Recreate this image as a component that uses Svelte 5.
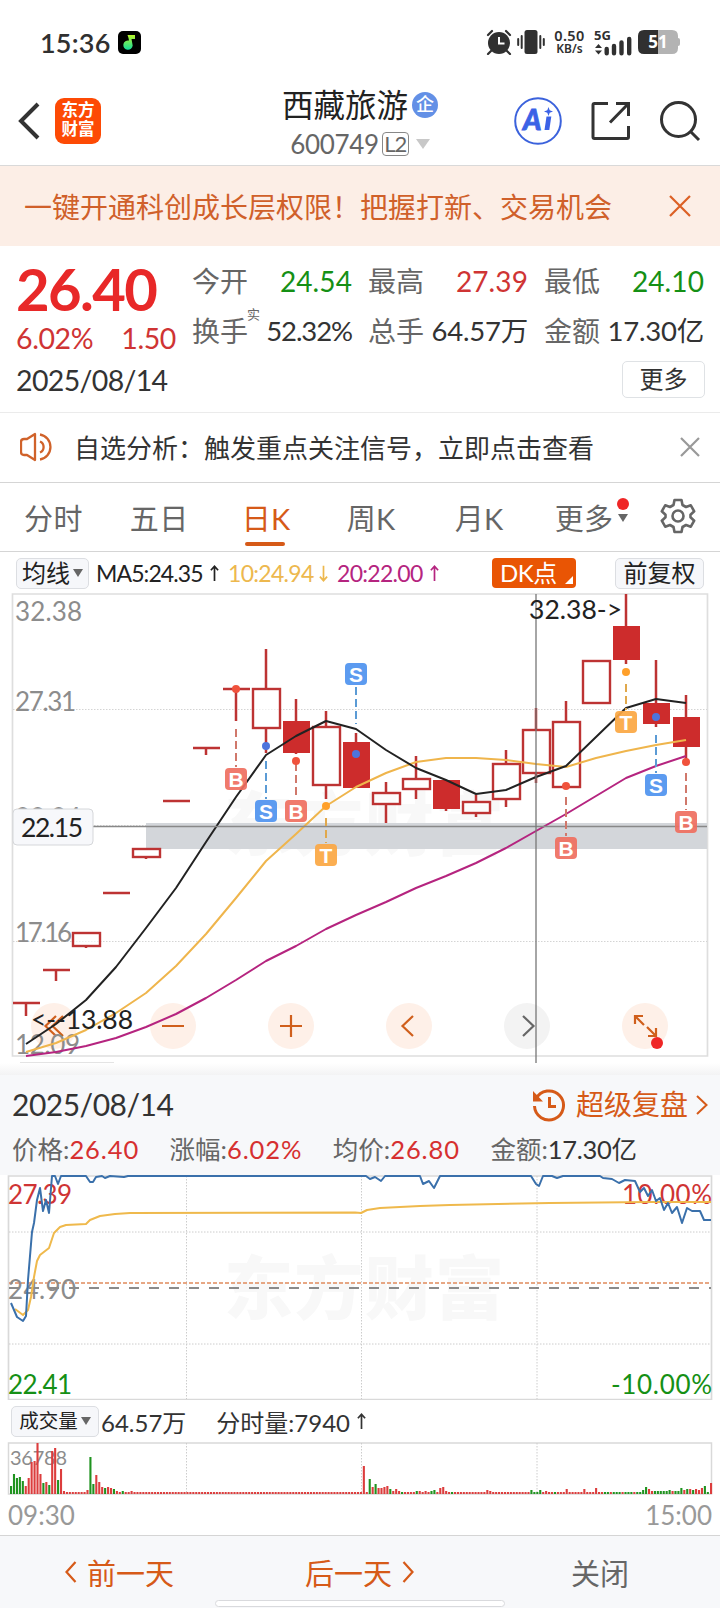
<script lang="ts">
  type Candle = { o: number; c: number; hi: number; lo: number; kind: "up" | "down" | "flat" };
  type Mark = { i: number; t: "B" | "S" | "T"; dot: number; y: number };

  const STEP = 30;
  const cx = (i: number) => 26 + i * STEP;

  // [top, bottom, high, low, kind] in chart pixels
  const raw: [number, number, number, number, Candle["kind"]][] = [
    [1003, 1003, 1003, 1016, "flat"],
    [970, 970, 970, 981, "flat"],
    [933, 946, 933, 948, "up"],
    [893, 893, 893, 893, "flat"],
    [849, 857, 849, 859, "up"],
    [801, 801, 801, 801, "flat"],
    [748, 748, 748, 755, "flat"],
    [689, 689, 689, 721, "flat"],
    [689, 728, 649, 753, "up"],
    [722, 753, 699, 754, "down"],
    [727, 785, 711, 799, "up"],
    [743, 788, 733, 788, "down"],
    [793, 804, 782, 823, "up"],
    [779, 789, 756, 799, "up"],
    [781, 809, 781, 811, "down"],
    [802, 813, 795, 817, "up"],
    [764, 799, 750, 807, "up"],
    [730, 773, 708, 783, "up"],
    [722, 787, 701, 787, "up"],
    [661, 703, 661, 703, "up"],
    [627, 660, 594, 664, "down"],
    [704, 724, 660, 727, "down"],
    [718, 747, 695, 762, "down"],
  ];
  const candles: Candle[] = raw.map(([o, c, hi, lo, kind]) => ({ o, c, hi, lo, kind }));

  const ma5 = [1044, 1024, 1000, 967, 928, 888, 842, 797, 755, 736, 721, 729, 750, 768, 780, 794, 790, 777, 766, 737, 708, 699, 703];
  const ma10 = [1052, 1043, 1030, 1013, 993, 966, 934, 898, 861, 834, 806, 787, 773, 762, 758, 758, 760, 764, 767, 758, 751, 745, 740];
  const ma20 = [1056, 1052, 1046, 1038, 1027, 1014, 998, 980, 961, 946, 929, 915, 902, 888, 876, 863, 848, 831, 814, 796, 778, 766, 756];
  const pts = (a: number[]) => a.map((y, i) => `${cx(i)},${y}`).join(" ");

  const marks: Mark[] = [
    { i: 7, t: "B", dot: 689, y: 779 },
    { i: 8, t: "S", dot: 746, y: 811 },
    { i: 9, t: "B", dot: 761, y: 811 },
    { i: 10, t: "T", dot: 806, y: 855 },
    { i: 11, t: "S", dot: 754, y: 674 },
    { i: 18, t: "B", dot: 786, y: 848 },
    { i: 20, t: "T", dot: 672, y: 722 },
    { i: 21, t: "S", dot: 717, y: 785 },
    { i: 22, t: "B", dot: 762, y: 822 },
  ];
  const markLine = (m: Mark) =>
    m.y < m.dot
      ? { a: m.y + 13, b: 724 }
      : { a: m.dot + (m.i === 7 ? 40 : m.i === 8 ? 15 : m.t === "T" ? 12 : m.i === 9 ? 2 : m.i === 21 ? 18 : 11), b: m.y - 12 };

  const priceLine =
    "11,1303 17,1317 23,1321 26,1316 28,1280 32,1232 34,1223 37,1200 40,1188 43,1211 46,1200 49,1213 52,1176 55,1176 58,1184 61,1176 86,1176 90,1182 93,1182 96,1177 102,1176 105,1178 110,1176 124,1177 128,1176 361,1176 366,1176 370,1179 375,1177 381,1181 385,1176 420,1176 423,1184 429,1181 434,1188 440,1176 531,1176 536,1184 539,1186 543,1176 552,1176 557,1178 563,1176 600,1176 603,1178 612,1179 619,1183 625,1180 635,1181 640,1192 644,1188 648,1196 652,1190 656,1201 660,1198 664,1210 668,1203 672,1213 677,1207 682,1223 687,1208 692,1211 700,1211 704,1220 711,1220";
  const avgLine =
    "15,1309 23,1315 28,1310 31,1297 34,1277 37,1261 40,1255 49,1248 54,1233 60,1227 66,1225 86,1224 90,1220 100,1216 115,1214 130,1213 355,1212.5 361,1213 367,1210 380,1208 400,1207 420,1206 450,1205 550,1203 650,1202 711,1202";

  // minute volume; negative = falling minute
  const spikes: Record<number, number> = {
    0: -8, 1: -20, 2: -16, 3: -17, 4: -13, 5: 8, 6: 16, 7: 32, 8: 33, 9: 51, 10: 20, 11: -11,
    12: 12, 13: -9, 14: 43, 15: 46, 16: -14, 17: 25, 18: 3, 26: 4, 27: -37, 28: -10, 29: 19,
    30: 12, 31: 7, 32: -6, 33: 7, 34: 6, 35: -5, 36: 3, 38: -3, 41: 3, 120: 28, 122: -15,
    123: 7, 124: -10, 125: 6, 126: 6, 127: 7, 128: 8, 129: -5, 130: 3, 131: 5, 132: 3, 133: -2,
    138: -3, 139: 3, 141: 3, 143: -3, 144: -4, 146: 6, 147: 7, 148: 3, 149: 2, 150: -2, 162: 4,
    163: 3, 177: -4, 178: -2, 179: -2, 180: -4, 182: 3, 185: -2, 189: 5, 195: 5, 199: 6, 215: -4,
    216: -7, 217: 5, 218: 3, 219: -3, 220: -3, 221: -3, 222: -3, 223: -3, 224: -4, 225: 3,
    226: -3, 227: -3, 228: -6, 229: 4, 230: -5, 231: 5, 232: -4, 233: 5, 234: 4, 235: 6, 236: -8,
    237: -2, 238: 11,
  };
  const volume = Array.from({ length: 239 }, (_, i) => {
    const v = spikes[i] ?? (i > 201 && i < 215 && i % 4 ? -2 : 2);
    return { x: i === 238 ? 711 : 11 + i * 2.94, h: Math.abs(v), up: v > 0 };
  });

  const quotes = [
    { k: "今开", v: "24.54", cls: "green" },
    { k: "最高", v: "27.39", cls: "red" },
    { k: "最低", v: "24.10", cls: "green" },
    { k: "换手", v: "52.32%", cls: "pct", sup: "实" },
    { k: "总手", v: "64.57万", cls: "" },
    { k: "金额", v: "17.30亿", cls: "" },
  ];
  const tabs = ["分时", "五日", "日K", "周K", "月K"];
  let active = $state("日K");

  const stats = [
    { k: "价格", v: "26.40", red: true },
    { k: "涨幅", v: "6.02%", red: true },
    { k: "均价", v: "26.80", red: true },
    { k: "金额", v: "17.30亿", red: false },
  ];
</script>

<div class="screen">
  <div class="status">
    <span class="clock">15:36</span>
    <svg class="app-dot" width="23" height="23" viewBox="0 0 23 23">
      <defs>
        <linearGradient id="note" x1="0" y1="0" x2="0" y2="1">
          <stop offset="0" stop-color="#b8f52a" />
          <stop offset="1" stop-color="#12dc9c" />
        </linearGradient>
      </defs>
      <rect width="23" height="23" rx="5" fill="#000" />
      <path d="M9.500 4H17v4h-3.500l1.200 6.500a4.700 4.700 0 1 1-3.700-5L10.500 7z" fill="url(#note)" />
    </svg>
    <span class="grow"></span>
    <svg class="alarm" width="26" height="26" viewBox="0 0 26 26">
      <circle cx="13" cy="14" r="11" fill="#303030" />
      <path d="M2 6l4-4M24 6l-4-4M5 22l-3 3M21 22l3 3" stroke="#303030" stroke-width="2.200" stroke-linecap="round" />
      <path d="M13 8v6.500h5.500" fill="none" stroke="#fff" stroke-width="2" />
    </svg>
    <svg class="vibrate" width="28" height="26" viewBox="0 0 28 26">
      <rect x="7.500" y="1" width="13" height="24" rx="2.500" fill="#303030" />
      <path d="M4.700 7v12M23.300 7v12M1.200 10v6M26.800 10v6" stroke="#303030" stroke-width="2" stroke-linecap="round" />
    </svg>
    <div class="speed"><b>0.50</b><span>KB/s</span></div>
    <svg class="signal" width="40" height="36" viewBox="0 -5 40 36">
      <text x="0" y="10.500" class="g5">5G</text>
      <path d="M1 19l3.500-4 3.500 4zM1 21.500l3.500 4 3.500-4z" fill="#303030" />
      <path d="M12.700 20v4.200M20 17v7.200M27.500 13.500v10.700M35.200 10v14.200" stroke="#303030" stroke-width="4.400" stroke-linecap="round" />
    </svg>
    <svg width="42" height="24" viewBox="0 0 42 24">
      <path d="M6 0H34Q40 0 40 6V18Q40 24 34 24H6z" fill="#b3b3b3" />
      <path d="M40 8q2 0 2 2v4q0 2-2 2z" fill="#b3b3b3" />
      <path d="M6 0H20V24H6Q0 24 0 18V6Q0 0 6 0z" fill="#303030" />
      <text x="20" y="18.200" text-anchor="middle" class="batt">51</text>
    </svg>
  </div>

  <header>
    <div class="left">
      <svg width="22" height="38" viewBox="0 0 22 38"><path d="M20 2L3 19l17 17" fill="none" stroke="#333" stroke-width="4" /></svg>
      <div class="logo"><span>东方</span><span>财富</span></div>
    </div>
    <div class="title">
      <div class="name">西藏旅游<i class="corp">企</i></div>
      <div class="code">600749<i class="l2">L2</i><i class="caret"></i></div>
    </div>
    <div class="tools">
      <svg width="48" height="48" viewBox="0 0 48 48">
        <circle cx="24" cy="24" r="22.800" fill="none" stroke="#3b62dc" stroke-width="2" />
        <text x="9" y="33" class="ai">A</text>
        <path d="M32.500 19.500h4.800l-2 13.500h-4.800z" fill="#3b62e6" />
        <path d="M34.500 10l1.200 3.300 3.300 1.200-3.300 1.200-1.200 3.300-1.200-3.300-3.300-1.200 3.300-1.200z" fill="#3b62e6" />
      </svg>
      <svg width="40" height="40" viewBox="0 0 40 40" fill="none" stroke="#333" stroke-width="3">
        <path d="M17 2.500H3.500Q2 2.500 2 4V36q0 1.500 1.500 1.500H36q1.500 0 1.500-1.500V25M25 2.500H37.500V15M37 3L19 21.500" />
      </svg>
      <svg width="42" height="42" viewBox="0 0 42 42" fill="none" stroke="#333" stroke-width="3">
        <circle cx="19.500" cy="19.500" r="17" /><path d="M31.500 31.500L40 40" />
      </svg>
    </div>
  </header>

  <div class="banner">
    <span>一键开通科创成长层权限！把握打新、交易机会</span>
    <svg width="22" height="22" viewBox="0 0 22 22"><path d="M1 1l20 20M21 1L1 21" stroke="#dc6024" stroke-width="2.200" /></svg>
  </div>

  <section class="quote">
    <div class="price">
      <strong>26.40</strong>
      <div class="chg"><span>6.02%</span><span>1.50</span></div>
      <div class="date">2025/08/14</div>
    </div>
    <div class="right">
      <div class="cells">
        {#each quotes as q}
          <div class="cell">
            <span class="k">{q.k}{#if q.sup}<sup>{q.sup}</sup>{/if}</span>
            <span class="v {q.cls}">{q.v}</span>
          </div>
        {/each}
      </div>
      <button class="more">更多</button>
    </div>
  </section>

  <div class="news">
    <svg width="34" height="30" viewBox="0 0 34 30" fill="none" stroke="#d0622a" stroke-width="2.300">
      <path d="M15 2v26l-8-5H4q-3 0-3-3v-10q0-3 3-3h3z" stroke-linejoin="round" />
      <path d="M20 9.500a6 6 0 0 1 0 11M20 2.500a12.700 12.700 0 0 1 0 25" />
    </svg>
    <span>自选分析：触发重点关注信号，立即点击查看</span>
    <svg width="20" height="20" viewBox="0 0 20 20"><path d="M1 1l18 18M19 1L1 19" stroke="#999" stroke-width="2.200" /></svg>
  </div>

  <nav class="tabs">
    {#each tabs as t}
      <button class:active={active === t} onclick={() => (active = t)}>{t}</button>
    {/each}
    <button class="tab-more">更多<svg width="12" height="32" viewBox="0 0 12 32"><circle cx="6" cy="7" r="6" fill="#ef2626" /><path d="M1 17h10l-5 8z" fill="#666" /></svg></button>
    <svg class="gear" width="36" height="36" viewBox="0 0 36 36" fill="none" stroke="#666" stroke-width="2.600" stroke-linejoin="round">
      <path d="M14.500 2h7l1 5 3.500 2 4.800-1.700 3.400 6-3.700 3.400v2.600l3.700 3.400-3.400 6L26 27l-3.500 2-1 5h-7l-1-5-3.500-2-4.800 1.700-3.400-6 3.700-3.400v-2.600l-3.700-3.400 3.400-6L10 9l3.500-2z" />
      <circle cx="18" cy="18" r="5.500" />
    </svg>
  </nav>

  <div class="indicators">
    <button class="chip">均线<i class="tri"></i></button>
    <span class="ma m5">MA5:24.35</span><svg class="arrow" viewBox="0 0 12 20"><path d="M6 19V3M2 7l4-4.500L10 7" stroke="#222" /></svg>
    <span class="ma m10">10:24.94</span><svg class="arrow" viewBox="0 0 12 20"><path d="M6 2v16M2 14l4 4.500L10 14" stroke="#edb84e" /></svg>
    <span class="ma m20">20:22.00</span><svg class="arrow" viewBox="0 0 12 20"><path d="M6 19V3M2 7l4-4.500L10 7" stroke="#b5247f" /></svg>
    <span class="grow"></span>
    <button class="dk">DK点<svg width="8" height="8" viewBox="0 0 8 8"><path d="M8 0v8H0z" fill="#fff" /></svg></button>
    <button class="chip fq">前复权</button>
  </div>

  <svg class="kline" width="720" height="483" viewBox="0 592 720 483">
    <defs>
      <linearGradient id="shade" x1="0" y1="0" x2="0" y2="1">
        <stop offset="0" stop-color="#fff" /><stop offset="1" stop-color="#f3f3f4" />
      </linearGradient>
    </defs>
    <rect x="0" y="1063" width="720" height="12" fill="url(#shade)" />
    <text x="224" y="850" class="water" textLength="280">东方财富</text>
    <path d="M12.500 594H707.500V1056H12.500z" fill="none" stroke="#dedede" stroke-width="1.700" />
    <path d="M13 709.500H707M13 825.500H707M13 941.500H707" stroke="#d4d4d4" stroke-dasharray="1.500 1.500" />
    <rect x="146" y="823" width="561" height="26" fill="#d3d6da" />

    <g class="pads">
      {#each [54, 173, 291, 409, 527, 645] as x, i}
        <circle cx={x} cy="1026" r="23" fill={i === 4 ? "#f3f3f3" : "#fef0e8"} />
      {/each}
      <path d="M56 1016l-10.500 10L56 1036M63 1016l-10.500 10L63 1036M162 1026h22M280 1026h22M291 1015v22M413 1016l-10.500 10L413 1036" />
      <path d="M523 1016l10.500 10L523 1036" class="gray" />
      <path d="M643 1016h-8v8M635 1016l9 9M648 1036h8v-8M656 1036l-9-9" />
    </g>
    <g class="axis">
      <text x="15" y="621" textLength="67">32.38</text>
      <text x="15" y="711" textLength="61">27.31</text>
      <text x="15" y="827" textLength="66">22.24</text>
      <text x="15" y="942" textLength="57">17.16</text>
      <text x="15" y="1054" textLength="65">12.09</text>
    </g>

    {#each candles as k, i}
      {#if k.lo > k.hi}
        {#if k.kind === "up"}
          <path d="M{cx(i)} {k.hi}V{k.o}M{cx(i)} {k.c}V{k.lo}" class="wick" />
        {:else}
          <path d="M{cx(i)} {k.hi}V{k.lo}" class="wick" />
        {/if}
      {/if}
      {#if k.kind === "up"}
        <rect x={cx(i) - 13} y={k.o} width="27" height={k.c - k.o} class="up" />
      {:else if k.kind === "down"}
        <rect x={cx(i) - 13} y={k.o - 1} width="27" height={k.c - k.o + 1} class="down" />
      {:else}
        <path d="M{cx(i) - 13} {k.o}h27" class="wick" />
      {/if}
    {/each}

    <polyline points={pts(ma20)} stroke="#b5247f" class="ma-line" />
    <polyline points={pts(ma10)} stroke="#efb54c" class="ma-line" />
    <polyline points={pts(ma5)} stroke="#222" class="ma-line" />

    <path d="M93 826.500H707" stroke="#888" stroke-width="1.300" />
    <path d="M536 594V1063" stroke="#777" stroke-opacity="0.650" stroke-width="2" />

    {#each marks as m}
      <g class="mark {m.t}">
        <path d="M{cx(m.i)} {markLine(m).a}V{markLine(m).b}" />
        <circle cx={cx(m.i)} cy={m.dot} r="4" />
        <rect x={cx(m.i) - 11} y={m.y - 11} width="22" height="22" rx="4" />
        <text x={cx(m.i)} y={m.y + 7.500}>{m.t}</text>
      </g>
    {/each}

    <rect x="13" y="809" width="80" height="36" rx="4" fill="#f7f8fb" stroke="#d5d7da" />
    <g class="dark">
      <text x="21" y="837" textLength="62">22.15</text>
      <text x="529" y="619" textLength="93">32.38-&gt;</text>
      <text x="31" y="1029" textLength="102">&lt;--13.88</text>
    </g>
    <circle cx="657" cy="1043" r="6" fill="#ef2626" />
    <path d="M20 1062.500H114" stroke="#e4e4e4" />
  </svg>

  <section class="replay">
    <div class="head">
      <span>2025/08/14</span>
      <div class="super">
        <svg width="34" height="34" viewBox="0 0 34 34" fill="none" stroke="#d65a18" stroke-width="3">
          <path d="M4 11A14.500 14.500 0 1 1 2.500 18" /><path d="M1 3v10.500h10z" fill="#d65a18" stroke="none" />
          <path d="M17.500 9v9.500H24" />
        </svg>
        超级复盘
        <svg width="12" height="20" viewBox="0 0 12 20" fill="none" stroke="#d65a18" stroke-width="2"><path d="M1 1l9.500 9L1 19" /></svg>
      </div>
    </div>
    <div class="stats">
      {#each stats as s}
        <span>{s.k}:<b class:red={s.red}>{s.v}</b></span>
      {/each}
    </div>
  </section>

  <svg class="minute" width="720" height="225" viewBox="0 1175 720 225">
    <text x="224" y="1314" class="water" textLength="280">东方财富</text>
    <path d="M8.500 1176H711.500V1399.500H8.500z" fill="none" stroke="#d9d9d9" stroke-width="1.700" />
    <path d="M9 1232H711M9 1344H711M186.500 1176V1399M361.500 1176V1399M537 1176V1399" stroke="#ccc" stroke-dasharray="1.500 1.500" />
    <path d="M9 1283H711" stroke="#e08a5c" stroke-width="1.300" stroke-dasharray="4 2" />
    <path d="M9 1288H711" stroke="#666" stroke-width="1.500" stroke-dasharray="10 10" />
    <g class="axis">
      <text x="8" y="1299" textLength="68">24.90</text>
      <text x="8" y="1204" textLength="64" class="r">27.39</text>
      <text x="8" y="1394" textLength="64" class="g">22.41</text>
      <text x="622" y="1204" textLength="90" class="r">10.00%</text>
      <text x="611" y="1394" textLength="101" class="g">-10.00%</text>
    </g>
    <polyline points={avgLine} stroke="#efb94c" class="ma-line" />
    <polyline points={priceLine} stroke="#3a70ab" class="ma-line" />
  </svg>

  <div class="vol-head">
    <button class="chip">成交量<i class="tri"></i></button>
    <span>64.57万</span>
    <span class="tick">分时量:7940</span>
    <svg class="arrow" viewBox="0 0 12 20"><path d="M6 19V3M2 7l4-4.500L10 7" stroke="#333" /></svg>
  </div>

  <svg class="vol" width="720" height="54" viewBox="0 1442 720 54">
    <path d="M8.500 1443H711.500V1494H8.500z" fill="none" stroke="#d9d9d9" stroke-width="1.500" />
    <path d="M186.500 1443V1494M361.500 1443V1494M537 1443V1494" stroke="#ccc" stroke-dasharray="1.500 1.500" />
    <text x="10" y="1465" class="peak" textLength="57">36788</text>
    {#each volume as b}
      <rect x={b.x - 1} y={1494 - b.h} width="2.100" height={b.h} fill={b.up ? "#dc3d3d" : "#1f931f"} />
    {/each}
  </svg>
  <div class="times"><span>09:30</span><span>15:00</span></div>

  <footer>
    <div class="prev"><svg width="12" height="22" viewBox="0 0 12 22"><path d="M10.500 1L1.500 11l9 10" /></svg>前一天</div>
    <div class="next">后一天<svg width="12" height="22" viewBox="0 0 12 22"><path d="M1.500 1l9 10-9 10" /></svg></div>
    <div class="close">关闭</div>
    <div class="home"></div>
  </footer>
</div>

<style>
  :global(body) {
    background: #fff;
  }
  .screen {
    width: 720px;
    height: 1608px;
    overflow: hidden;
    display: flex;
    flex-direction: column;
    font-family: Lato, "Noto Sans CJK SC", sans-serif;
    color: #333;
    white-space: nowrap;
  }
  .screen > * {
    flex-shrink: 0;
    box-sizing: border-box;
  }
  svg {
    display: block;
    flex-shrink: 0;
  }
  i {
    font-style: normal;
  }
  button {
    font: inherit;
    color: inherit;
    background: none;
    border: 0;
    padding: 0;
    box-sizing: border-box;
    white-space: nowrap;
  }
  .grow {
    flex: 1;
  }
  .red {
    color: #cf3434;
  }
  .green {
    color: #159015;
  }

  .status {
    height: 84px;
    display: flex;
    align-items: center;
    padding: 0 40px 0 40px;
  }
  .clock {
    width: 78px;
    font-size: 27px;
    font-weight: 600;
    letter-spacing: 0.2px;
    color: #303030;
  }
  .vibrate {
    margin: 0 8px 0 5px;
  }
  .speed {
    width: 33px;
    display: flex;
    flex-direction: column;
    align-items: center;
    font: 600 12px/14px "Noto Sans", sans-serif;
    color: #303030;
    margin-right: 8px;
  }
  .speed b {
    font-size: 14.5px;
    font-weight: 600;
    letter-spacing: 0.4px;
  }
  .signal {
    margin-right: 4px;
  }
  .g5 {
    font: 700 13px "Noto Sans", sans-serif;
    fill: #303030;
  }
  .batt {
    font: 700 17px "Noto Sans", sans-serif;
    fill: #fff;
  }

  header {
    height: 82px;
    display: grid;
    grid-template-columns: 1fr auto 1fr;
    border-bottom: 1px solid #d9d9d9;
  }
  .left {
    display: flex;
    align-items: flex-start;
    gap: 15px;
    padding: 14px 0 0 18px;
  }
  .left svg {
    margin-top: 4px;
  }
  .logo {
    width: 46px;
    height: 46px;
    box-sizing: border-box;
    border-radius: 9px;
    background: #fd4a05;
    color: #fff;
    font-size: 16.5px;
    font-weight: 700;
    line-height: 19px;
    padding-top: 3px;
    display: flex;
    flex-direction: column;
    align-items: center;
  }
  .title {
    display: flex;
    flex-direction: column;
    align-items: center;
    color: #222;
  }
  .name {
    height: 42px;
    display: flex;
    align-items: center;
    font-size: 31.5px;
    line-height: 42px;
  }
  .corp {
    width: 26px;
    height: 26px;
    margin-left: 4px;
    border-radius: 50%;
    background: #6390e6;
    color: #fff;
    font-size: 18px;
    font-weight: 500;
    line-height: 25px;
    text-align: center;
  }
  .code {
    display: flex;
    align-items: center;
    height: 36px;
    font-size: 26px;
    letter-spacing: -0.3px;
    color: #666;
  }
  .l2 {
    width: 25px;
    height: 22px;
    margin-left: 3px;
    border: 1.5px solid #888;
    border-radius: 4px;
    font-size: 22px;
    line-height: 22px;
    text-align: center;
    letter-spacing: -1px;
  }
  .caret {
    margin-left: 7px;
    border: 7px solid transparent;
    border-top: 10px solid #c8c8c8;
    border-bottom: 0;
  }
  .tools {
    display: flex;
    justify-content: flex-end;
    align-items: flex-start;
    padding: 13px 19px 0 0;
  }
  .tools svg:nth-child(2) {
    margin: 4px 28px 0 29px;
  }
  .tools svg:nth-child(3) {
    margin-top: 3px;
  }
  .ai {
    font: italic 900 28px Lato, sans-serif;
    fill: #3b62e6;
    stroke: #3b62e6;
    stroke-width: 0.8px;
  }

  .banner {
    height: 80px;
    display: flex;
    align-items: center;
    justify-content: space-between;
    padding: 0 29px 0 24px;
    background: #fceee6;
    color: #d0602a;
    font-size: 28px;
    padding-bottom: 1px;
  }

  .quote {
    height: 167px;
    display: flex;
    padding: 0 16px;
    border-bottom: 1px solid #ebebeb;
  }
  .price {
    width: 177px;
    padding-top: 11px;
  }
  .price strong {
    display: block;
    font-size: 58px;
    line-height: 64px;
    letter-spacing: -1.6px;
    color: #e82828;
  }
  .chg {
    width: 160px;
    display: flex;
    justify-content: space-between;
    font-size: 28.5px;
    line-height: 34px;
    letter-spacing: -0.4px;
    color: #cf3434;
  }
  .date {
    font-size: 28.5px;
    line-height: 34px;
    margin-top: 8px;
    letter-spacing: -0.65px;
  }
  .right {
    flex: 1;
    display: flex;
    flex-direction: column;
    align-items: flex-end;
  }
  .cells {
    width: 512px;
    display: grid;
    grid-template-columns: 160px 160px 160px;
    column-gap: 16px;
    grid-auto-rows: 50px;
    padding-top: 10px;
  }
  .cell {
    display: flex;
    justify-content: space-between;
    align-items: center;
    font-size: 28px;
    line-height: 40px;
  }
  .cell .k {
    color: #666;
    position: relative;
  }
  .cell .v {
    letter-spacing: 0.1px;
  }
  .cell:nth-child(n + 4) .v {
    font-size: 27.5px;
    letter-spacing: -0.2px;
  }
  .cell:nth-child(n + 4) .pct {
    letter-spacing: -1.1px;
  }
  sup {
    position: absolute;
    left: 55px;
    top: -8px;
    font-size: 13px;
    line-height: 22px;
  }
  .more {
    width: 83px;
    height: 37px;
    margin: 5px -1px 0 0;
    border: 1.5px solid #dfe2e5;
    border-radius: 5px;
    font-size: 24px;
    line-height: 32px;
    padding-bottom: 2px;
  }

  .news {
    height: 70px;
    display: flex;
    align-items: center;
    padding: 0 20px 2px 20px;
    border-bottom: 1px solid #d5d5d5;
    font-size: 26px;
  }
  .news span {
    flex: 1;
    margin-left: 20px;
  }

  .tabs {
    height: 69px;
    display: flex;
    align-items: center;
    border-bottom: 1px solid #d5d5d5;
    font-size: 29px;
    color: #666;
    padding-left: 24px;
  }
  .tabs button {
    height: 68px;
    padding-bottom: 0;
    margin-right: 47px;
    border-bottom: 0;
    letter-spacing: 0.4px;
  }
  .tabs button:nth-child(2) {
    margin-right: 53px;
  }
  .tabs button:nth-child(3) {
    margin-right: 56px;
  }
  .tabs button:nth-child(4) {
    margin-right: 59px;
  }
  .tabs button:nth-child(5) {
    margin-right: 51px;
  }
  .tabs .active {
    position: relative;
    color: #d65a18;
  }
  .tabs .active::after {
    content: "";
    position: absolute;
    left: 3px;
    bottom: 5px;
    width: 40px;
    height: 4px;
    border-radius: 2px;
    background: #d65a18;
  }
  .tabs .tab-more {
    display: flex;
    align-items: center;
    margin-right: 31px;
  }
  .tab-more svg {
    margin: -8px 0 0 4px;
  }
  .gear {
    margin-top: -2px;
  }

  .indicators {
    height: 40px;
    display: flex;
    align-items: center;
    padding: 2px 16px 0;
  }
  .chip {
    height: 31px;
    display: flex;
    align-items: center;
    justify-content: center;
    gap: 3px;
    padding: 0 5px;
    border: 1px solid #dcdee2;
    border-radius: 5px;
    background: #f6f7fa;
    font-size: 24px;
    line-height: 28px;
    color: #222;
  }
  .indicators .chip:first-child {
    width: 73px;
  }
  .tri {
    border: 5px solid transparent;
    border-top: 8px solid #666;
    border-bottom: 0;
  }
  .ma {
    font-size: 23px;
    letter-spacing: -0.7px;
    line-height: 28px;
  }
  .m5 {
    width: 107px;
    margin-left: 7px;
    color: #222;
    letter-spacing: -0.9px;
  }
  .m10 {
    width: 84px;
    margin-left: 8px;
    color: #edb84e;
  }
  .m20 {
    width: 86px;
    margin-left: 8px;
    color: #b5247f;
  }
  .arrow {
    width: 11px;
    height: 18px;
    margin-left: 6px;
    fill: none;
    stroke-width: 1.9;
  }
  .dk {
    width: 84px;
    height: 30px;
    margin-right: 39px;
    display: flex;
    align-items: center;
    padding-left: 8px;
    border-radius: 4px;
    background: #e95504;
    color: #fff;
    font-size: 24px;
    line-height: 28px;
    letter-spacing: -0.5px;
  }
  .dk svg {
    margin: 14px 0 0 8px;
  }
  .fq {
    width: 89px;
  }

  .axis text {
    font-size: 26px;
    fill: #8c8c8c;
  }
  .axis .r {
    fill: #cf3434;
  }
  .axis .g {
    fill: #159015;
  }
  .dark text {
    font-size: 26.5px;
    fill: #222;
  }
  .water {
    font-size: 69px;
    font-weight: 900;
    fill: #f8f8f8;
  }
  .wick {
    stroke: #bd3333;
    stroke-width: 2.5;
  }
  .up {
    fill: #fff;
    fill-opacity: 0.6;
    stroke: #bd3333;
    stroke-width: 2.4;
  }
  .down {
    fill: #cd2c2c;
  }
  .ma-line {
    fill: none;
    stroke-width: 2;
    stroke-linejoin: round;
  }
  .pads path {
    fill: none;
    stroke: #d05f1c;
    stroke-width: 2.2;
  }
  .pads .gray {
    stroke: #666;
  }
  .mark path {
    fill: none;
    stroke-width: 2;
    stroke-dasharray: 8 4;
  }
  .mark text {
    font: 700 21px "Liberation Sans", sans-serif;
    fill: #fff;
    text-anchor: middle;
  }
  .B path {
    stroke: #d0786b;
  }
  .B circle {
    fill: #f0523c;
  }
  .B rect {
    fill: #ef6f60;
    fill-opacity: 0.92;
  }
  .S path {
    stroke: #5b9bd5;
  }
  .S circle {
    fill: #4d74dc;
  }
  .S rect {
    fill: #5c9bf0;
  }
  .T path {
    stroke: #e0a84c;
  }
  .T circle {
    fill: #ffa02a;
  }
  .T rect {
    fill: #fba844;
    fill-opacity: 0.93;
  }

  .replay {
    height: 100px;
    padding: 8px 12px 0;
    background: #f7f8fa;
  }
  .head {
    display: flex;
    justify-content: space-between;
    font-size: 30px;
    line-height: 43px;
    letter-spacing: -0.5px;
  }
  .super {
    display: flex;
    align-items: center;
    font-size: 28px;
    letter-spacing: 0;
    color: #d65a18;
  }
  .super svg:first-child {
    margin-right: 10px;
  }
  .super svg:last-child {
    margin-left: 8px;
  }
  .stats {
    display: flex;
    gap: 30.5px;
    font-size: 25.5px;
    line-height: 47px;
    color: #666;
  }
  .stats b {
    font-weight: 400;
    letter-spacing: -0.3px;
    color: #333;
  }
  .stats b.red {
    letter-spacing: 0.9px;
    color: #d63030;
  }

  .vol-head {
    height: 42px;
    display: flex;
    align-items: center;
    padding: 0 11px;
    font-size: 24px;
  }
  .vol-head .chip {
    width: 88px;
    font-size: 19.5px;
    margin-right: 2px;
  }
  .tick {
    margin-left: 30px;
  }
  .peak {
    font-size: 20px;
    fill: #8c8c8c;
  }
  .times {
    height: 39px;
    display: flex;
    justify-content: space-between;
    padding: 1px 8px 0;
    font-size: 26px;
    line-height: 36px;
    color: #999;
  }

  footer {
    height: 73px;
    position: relative;
    display: flex;
    align-items: center;
    border-top: 1px solid #d5d5d5;
    background: #f7f8fa;
    font-size: 29px;
    color: #d65a18;
    padding: 0 0 0 65px;
  }
  footer svg {
    fill: none;
    stroke: #d65a18;
    stroke-width: 2.2;
  }
  .prev,
  .next {
    display: flex;
    align-items: center;
    gap: 10px;
  }
  .prev {
    width: 240px;
  }
  .next {
    width: 266px;
  }
  .close {
    color: #666;
  }
  .home {
    position: absolute;
    left: 215px;
    bottom: 1px;
    width: 288px;
    height: 5px;
    border: 1px solid #d9dadd;
    border-radius: 4px;
    background: #fff;
  }
</style>
